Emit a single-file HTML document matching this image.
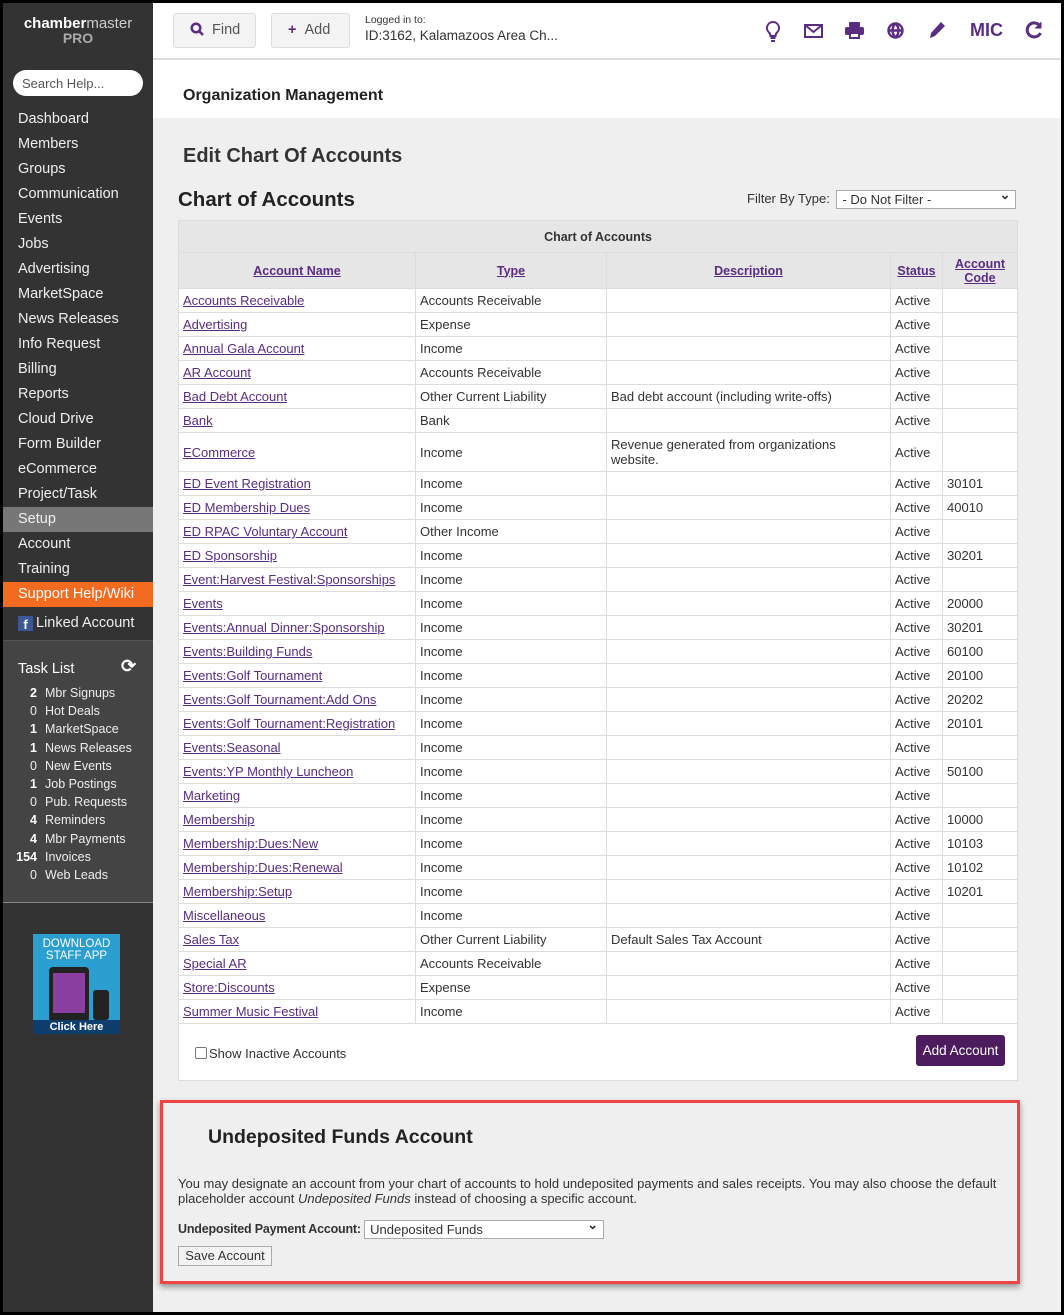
<!DOCTYPE html>
<html><head><meta charset="utf-8"><style>
*{box-sizing:border-box;margin:0;padding:0}
body{width:1064px;height:1315px;background:#000;font-family:"Liberation Sans",sans-serif;position:relative;overflow:hidden;color:#333}
#side{position:absolute;left:3px;top:3px;width:150px;height:1309px;background:#333;color:#eee}
#main{position:absolute;left:153px;top:3px;width:908px;height:1309px;background:#efefef}
.logo{position:absolute;left:0;width:150px;top:13px;text-align:center;font-size:15px;color:#fff;line-height:15px}
.logo b{font-weight:bold}.logo span{color:#ccc}
.logo .pro{color:#aaa;font-weight:bold;font-size:14px}
.search{position:absolute;left:10px;top:67px;width:130px;height:26px;background:#fff;border-radius:13px;color:#555;font-size:13px;padding:6px 9px}
.nav{position:absolute;top:104px;left:0;width:150px}
.nav div{height:25px;line-height:25px;padding-left:15px;font-size:14.5px;color:#eee}
.nav .setup{background:#777}
.nav .sup{background:#f26b21;color:#fff}
.fb{display:inline-block;width:15px;height:15px;background:#3b5998;color:#fff;font-weight:bold;font-size:13px;line-height:17px;text-align:center;vertical-align:-2px;margin-right:3px}
.task{position:absolute;left:0;top:637px;width:150px;height:263px;background:#444;border-top:1px solid #555;border-bottom:1px solid #888}
.task h3{position:absolute;left:15px;top:20px;font-weight:normal;font-size:14.5px;color:#fff}
.task .ref{position:absolute;left:118px;top:15px;font-size:18px;color:#fff;font-weight:bold}
.tl{position:absolute;top:43px;left:0;font-size:12.5px;line-height:18.2px}
.tl div{display:flex}.tl i{font-style:normal;width:34px;text-align:right;margin-right:8px}.tl i.b{font-weight:bold;color:#fff}
.app{position:absolute;left:30px;top:931px;width:87px;height:100px;background:#2a9fd0;color:#fff;text-align:center;font-size:11.5px;line-height:12px;padding-top:4px}
.app .ph{position:absolute;left:16px;top:33px;width:40px;height:55px;background:#222;border-radius:4px}
.app .ph div{position:absolute;left:4px;top:6px;width:32px;height:40px;background:#8b3fa0}
.app .ph2{position:absolute;left:60px;top:56px;width:16px;height:30px;background:#222;border-radius:3px}
.app .ch{position:absolute;left:0;bottom:0;width:87px;height:14px;background:#0e3e6e;font-weight:bold;font-size:11px;line-height:14px}
.hdr{position:absolute;left:0;top:0;width:908px;height:57px;background:#fff;border-bottom:2px solid #ddd}
.btn{position:absolute;top:10px;height:35px;background:#f3f3f3;border:1px solid #ddd;border-radius:3px;font-size:14.5px;color:#555;line-height:33px;padding-left:16px}
.btn b{color:#5a2d82;margin-right:8px}
.log{position:absolute;left:212px;top:11px;font-size:10.5px;color:#333}
.log div{font-size:13.5px;margin-top:2px}
.ic{position:absolute;top:18px;color:#5a2d82}
.org{position:absolute;left:0;top:57px;width:908px;height:58px;background:#fff;font-weight:bold;font-size:16px;padding:27px 30px;color:#222}
h1{position:absolute;left:30px;top:142px;font-size:20px;color:#333}
h2{position:absolute;left:25px;top:185px;font-size:20.5px;color:#222}
.filt{position:absolute;left:594px;top:187px;font-size:13px}
.sel{display:inline-block;width:180px;height:19px;border:1px solid #aaa;background:#fff;vertical-align:middle;font-size:13px;padding:1px 5px;position:relative;margin-left:3px}
.sel:after{content:"⌄";position:absolute;right:5px;top:-4px;font-weight:bold}
.box{position:absolute;left:25px;top:217px;width:840px;height:861px;background:#fff;border:1px solid #ddd}
table{border-collapse:collapse;width:840px;position:absolute;left:-1px;top:-1px;font-size:13px}
td,th{border:1px solid #ddd;padding:0 4px;height:24px;text-align:left;font-weight:normal}
th{background:#e6e6e6;text-align:center;font-weight:bold;font-size:12.5px}
th a,td a{color:#5a2d82;text-decoration:underline}
.inact{position:absolute;left:16px;top:825px;font-size:13px}
.inact span{display:inline-block;width:12px;height:12px;border:1px solid #777;border-radius:2px;vertical-align:-1px;margin-right:2px}
.add{position:absolute;left:737px;top:814px;width:89px;height:31px;background:#4c1c5e;border-radius:3px;color:#fff;font-size:13.5px;line-height:31px;text-align:center}
.red{position:absolute;left:7px;top:1097px;width:860px;height:184px;border:3px solid #ef4444;box-shadow:0 3px 6px rgba(0,0,0,.4);background:#efefef}
.red h3{position:absolute;left:45px;top:23px;font-size:19.5px;color:#222}
.red p{position:absolute;left:15px;top:73px;width:835px;font-size:13px;line-height:15px}
.red .row{position:absolute;left:15px;top:117px;font-size:12.5px;font-weight:bold;letter-spacing:-0.2px}
.red .sel{width:240px;font-weight:normal;letter-spacing:0;margin-left:0}
.red .sv{position:absolute;left:15px;top:143px;width:94px;height:20px;border:1px solid #aaa;background:#f3f3f3;font-size:13px;text-align:center;line-height:18px}
</style></head><body>
<div id="side">
 <div class="logo"><b>chamber</b><span>master</span><br><span class="pro">PRO</span></div>
 <div class="search">Search Help...</div>
 <div class="nav">
 <div>Dashboard</div><div>Members</div><div>Groups</div><div>Communication</div><div>Events</div><div>Jobs</div><div>Advertising</div><div>MarketSpace</div><div>News Releases</div><div>Info Request</div><div>Billing</div><div>Reports</div><div>Cloud Drive</div><div>Form Builder</div><div>eCommerce</div><div>Project/Task</div><div class="setup">Setup</div><div>Account</div><div>Training</div><div class="sup">Support Help/Wiki</div><div style="height:33px;line-height:33px"><span class="fb">f</span>Linked Account</div>
 </div>
 <div class="task"><h3>Task List</h3><div class="ref">⟳</div>
 <div class="tl">
 <div><i class="b">2</i>Mbr Signups</div><div><i>0</i>Hot Deals</div><div><i class="b">1</i>MarketSpace</div><div><i class="b">1</i>News Releases</div><div><i>0</i>New Events</div><div><i class="b">1</i>Job Postings</div><div><i>0</i>Pub. Requests</div><div><i class="b">4</i>Reminders</div><div><i class="b">4</i>Mbr Payments</div><div><i class="b">154</i>Invoices</div><div><i>0</i>Web Leads</div>
 </div></div>
 <div class="app">DOWNLOAD<br>STAFF APP<div class="ph"><div></div></div><div class="ph2"></div><div class="ch">Click Here</div></div>
</div>
<div id="main">
 <div class="hdr">
  <div class="btn" style="left:20px;width:83px"><svg width="14" height="14" viewBox="0 0 14 14" fill="none" stroke="#5a2d82" stroke-width="2.5" style="vertical-align:-2px;margin-right:8px"><circle cx="6" cy="6" r="4.3"/><path d="M9 9l4 4"/></svg>Find</div>
  <div class="btn" style="left:118px;width:79px"><b>+</b>Add</div>
  <div class="log">Logged in to:<div>ID:3162, Kalamazoos Area Ch...</div></div>
  <svg class="ic" style="left:612px;top:18px" width="16" height="22" viewBox="0 0 16 22" fill="none" stroke="#5a2d82" stroke-width="2"><path d="M8 1a6 6 0 0 0-4 10.5c1 1 1.5 2 1.5 3.5h5c0-1.5.5-2.5 1.5-3.5A6 6 0 0 0 8 1z"/><path d="M5.5 17h5M6 20h4"/></svg>
  <svg class="ic" style="left:651px;top:21px" width="19" height="14" viewBox="0 0 19 14" fill="none" stroke="#5a2d82" stroke-width="2"><rect x="1" y="1" width="17" height="12"/><path d="M1 1l8.5 7L18 1"/></svg>
  <svg class="ic" style="left:692px;top:19px" width="19" height="17" viewBox="0 0 19 17" fill="#5a2d82"><rect x="4" y="0" width="11" height="5" rx="1"/><rect x="0" y="5" width="19" height="8" rx="2"/><rect x="4" y="11" width="11" height="6"/><rect x="6" y="12" width="7" height="3" fill="#fff"/></svg>
  <svg class="ic" style="left:734px;top:19px" width="17" height="17" viewBox="0 0 17 17" fill="none" stroke="#5a2d82" stroke-width="2.4"><circle cx="8.5" cy="8.5" r="7"/><path d="M1.5 8.5h14M8.5 1.5c-4 4-4 10 0 14M8.5 1.5c4 4 4 10 0 14"/></svg>
  <svg class="ic" style="left:775px;top:18px" width="18" height="18" viewBox="0 0 18 18" fill="#5a2d82"><path d="M13 1l4 4-10 10-5 2 1-5z"/></svg>
  <div class="ic" style="left:817px;top:17px;font-weight:bold;font-size:18px">MIC</div>
  <svg class="ic" style="left:872px;top:18px" width="18" height="18" viewBox="0 0 18 18" fill="none" stroke="#5a2d82" stroke-width="3"><path d="M15 5A7 7 0 1 0 15.5 12"/><path d="M16 1v6h-6" fill="#5a2d82" stroke-width="1"/></svg>
 </div>
 <div class="org">Organization Management</div>
 <h1>Edit Chart Of Accounts</h1>
 <h2>Chart of Accounts</h2>
 <div class="filt">Filter By Type: <span class="sel">- Do Not Filter -</span></div>
 <div class="box">
 <table>
 <tr><th colspan="5" style="height:32px">Chart of Accounts</th></tr>
 <tr style="height:36px"><th style="width:237px"><a>Account Name</a></th><th style="width:191px"><a>Type</a></th><th style="width:284px"><a>Description</a></th><th style="width:52px"><a>Status</a></th><th><a>Account<br>Code</a></th></tr>
 <tr><td><a>Accounts Receivable</a></td><td>Accounts Receivable</td><td></td><td>Active</td><td></td></tr>
 <tr><td><a>Advertising</a></td><td>Expense</td><td></td><td>Active</td><td></td></tr>
 <tr><td><a>Annual Gala Account</a></td><td>Income</td><td></td><td>Active</td><td></td></tr>
 <tr><td><a>AR Account</a></td><td>Accounts Receivable</td><td></td><td>Active</td><td></td></tr>
 <tr><td><a>Bad Debt Account</a></td><td>Other Current Liability</td><td>Bad debt account (including write-offs)</td><td>Active</td><td></td></tr>
 <tr><td><a>Bank</a></td><td>Bank</td><td></td><td>Active</td><td></td></tr>
 <tr style="height:39px"><td><a>ECommerce</a></td><td>Income</td><td style="line-height:15px">Revenue generated from organizations website.</td><td>Active</td><td></td></tr>
 <tr><td><a>ED Event Registration</a></td><td>Income</td><td></td><td>Active</td><td>30101</td></tr>
 <tr><td><a>ED Membership Dues</a></td><td>Income</td><td></td><td>Active</td><td>40010</td></tr>
 <tr><td><a>ED RPAC Voluntary Account</a></td><td>Other Income</td><td></td><td>Active</td><td></td></tr>
 <tr><td><a>ED Sponsorship</a></td><td>Income</td><td></td><td>Active</td><td>30201</td></tr>
 <tr><td><a>Event:Harvest Festival:Sponsorships</a></td><td>Income</td><td></td><td>Active</td><td></td></tr>
 <tr><td><a>Events</a></td><td>Income</td><td></td><td>Active</td><td>20000</td></tr>
 <tr><td><a>Events:Annual Dinner:Sponsorship</a></td><td>Income</td><td></td><td>Active</td><td>30201</td></tr>
 <tr><td><a>Events:Building Funds</a></td><td>Income</td><td></td><td>Active</td><td>60100</td></tr>
 <tr><td><a>Events:Golf Tournament</a></td><td>Income</td><td></td><td>Active</td><td>20100</td></tr>
 <tr><td><a>Events:Golf Tournament:Add Ons</a></td><td>Income</td><td></td><td>Active</td><td>20202</td></tr>
 <tr><td><a>Events:Golf Tournament:Registration</a></td><td>Income</td><td></td><td>Active</td><td>20101</td></tr>
 <tr><td><a>Events:Seasonal</a></td><td>Income</td><td></td><td>Active</td><td></td></tr>
 <tr><td><a>Events:YP Monthly Luncheon</a></td><td>Income</td><td></td><td>Active</td><td>50100</td></tr>
 <tr><td><a>Marketing</a></td><td>Income</td><td></td><td>Active</td><td></td></tr>
 <tr><td><a>Membership</a></td><td>Income</td><td></td><td>Active</td><td>10000</td></tr>
 <tr><td><a>Membership:Dues:New</a></td><td>Income</td><td></td><td>Active</td><td>10103</td></tr>
 <tr><td><a>Membership:Dues:Renewal</a></td><td>Income</td><td></td><td>Active</td><td>10102</td></tr>
 <tr><td><a>Membership:Setup</a></td><td>Income</td><td></td><td>Active</td><td>10201</td></tr>
 <tr><td><a>Miscellaneous </a></td><td>Income</td><td></td><td>Active</td><td></td></tr>
 <tr><td><a>Sales Tax</a></td><td>Other Current Liability</td><td>Default Sales Tax Account</td><td>Active</td><td></td></tr>
 <tr><td><a>Special AR </a></td><td>Accounts Receivable</td><td></td><td>Active</td><td></td></tr>
 <tr><td><a>Store:Discounts</a></td><td>Expense</td><td></td><td>Active</td><td></td></tr>
 <tr><td><a>Summer Music Festival</a></td><td>Income</td><td></td><td>Active</td><td></td></tr>
 </table>
 <div class="inact"><span></span>Show Inactive Accounts</div>
 <div class="add">Add Account</div>
 </div>
 <div class="red">
  <h3>Undeposited Funds Account</h3>
  <p>You may designate an account from your chart of accounts to hold undeposited payments and sales receipts. You may also choose the default placeholder account <i>Undeposited Funds</i> instead of choosing a specific account.</p>
  <div class="row">Undeposited Payment Account: <span class="sel">Undeposited Funds</span></div>
  <div class="sv">Save Account</div>
 </div>
</div>
</body></html>
